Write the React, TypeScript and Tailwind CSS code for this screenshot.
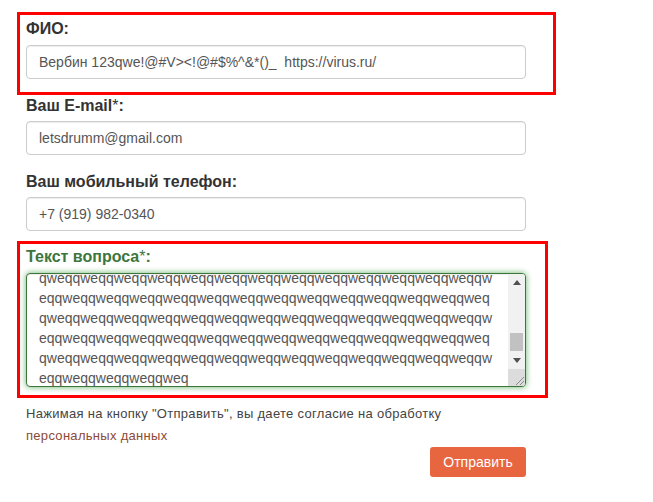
import React from 'react';

const unit = 'qweq';
const oddLine = unit.repeat(13) + 'qw';
const evenLine = 'eq' + unit.repeat(13);
const lines = [oddLine, evenLine, oddLine, evenLine, oddLine, 'eq' + unit.repeat(4)];

const Label: React.FC<{ children: React.ReactNode; className?: string }> = ({ children, className }) => (
  <div className={`text-[16px] leading-[20px] font-bold text-[#333] mb-[6px] ${className ?? ''}`}>{children}</div>
);

const TextInput: React.FC<{ value: string }> = ({ value }) => (
  <input
    readOnly
    value={value}
    className="block w-[500px] h-[34px] px-[12px] border border-[#ccc] rounded-[4px] bg-white text-[14px] text-[#555] shadow-[inset_0_1px_1px_rgba(0,0,0,0.075)] outline-none"
  />
);

const Scrollbar: React.FC = () => (
  <div className="w-[17px] flex flex-col bg-[#f1f1f1]">
    <div className="h-[17px] flex items-center justify-center">
      <svg width="8" height="5" viewBox="0 0 8 5"><path d="M0 5 L4 0 L8 5 Z" fill="#505050" /></svg>
    </div>
    <div className="h-[61px] flex flex-col">
      <div className="mt-[42px] h-[18px] mx-[2px] bg-[#c1c1c1]" />
    </div>
    <div className="h-[17px] flex items-center justify-center">
      <svg width="8" height="5" viewBox="0 0 8 5"><path d="M0 0 L8 0 L4 5 Z" fill="#505050" /></svg>
    </div>
    <div className="h-[17px] bg-[#dcdcdc] flex items-end justify-end">
      <svg width="12" height="12" viewBox="0 0 12 12">
        <path d="M11 3 L3 11 M11 7 L7 11" stroke="#8a8a8a" strokeWidth="1" />
      </svg>
    </div>
  </div>
);

export default function App() {
  return (
    <div className="min-h-[502px] bg-white pt-[12px] px-[17px]" style={{ fontFamily: '"Liberation Sans", Arial, sans-serif' }}>
      <div className="w-[539px] border-[3px] border-[#ff0000] pt-[4px] pb-[13px] px-[6px]">
        <Label>ФИО:</Label>
        <TextInput value="Вербин 123qwe!@#V><!@#$%^&*()_  https://virus.ru/" />
      </div>

      <div className="px-[9px] pt-[1px]">
        <Label className="!mb-[5px]">Ваш E-mail<span className="font-normal">*</span>:</Label>
        <TextInput value="letsdrumm@gmail.com" />
        <Label className="mt-[17px] !mb-[5px]">Ваш мобильный телефон:</Label>
        <TextInput value="+7 (919) 982-0340" />
      </div>

      <div className="mt-[10px] w-[531px] border-[3px] border-[#ff0000] pt-[3px] pb-[8px] px-[6px]">
        <Label className="!text-[#3c763d]">Текст вопроса<span className="font-normal">*</span>:</Label>
        <div className="w-[500px] h-[114px] border border-[#3c763d] rounded-[4px] bg-white flex overflow-hidden shadow-[inset_0_1px_1px_rgba(0,0,0,0.075),0_0_6px_#67b168]">
          <div className="flex-1 overflow-hidden pl-[12px] text-[14px] leading-[20px] text-[#555]">
            <div className="-mt-[6px]">
              {lines.map((l, i) => (
                <div key={i} className="whitespace-nowrap">{l}</div>
              ))}
            </div>
          </div>
          <Scrollbar />
        </div>
      </div>

      <div className="px-[9px] w-[518px]">
        <p className="mt-[5px] text-[13px] leading-[22px] tracking-[0.3px] text-[#444]">
          Нажимая на кнопку "Отправить", вы даете согласие на обработку{' '}
          <a className="text-[#8c4a36]">персональных данных</a>
        </p>
        <div className="flex justify-end">
          <button className="w-[96px] h-[30px] rounded-[3px] bg-[#e8663f] text-white text-[14px]">Отправить</button>
        </div>
      </div>
    </div>
  );
}
